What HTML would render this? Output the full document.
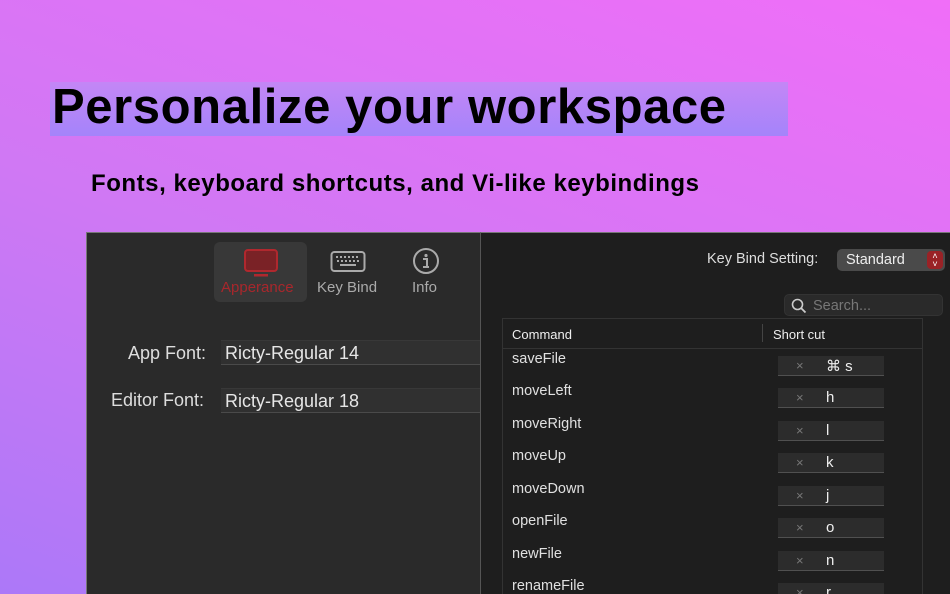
<!DOCTYPE html>
<html><head><meta charset="utf-8"><style>
*{margin:0;padding:0;box-sizing:border-box}
html,body{width:950px;height:594px;overflow:hidden}
body{position:relative;font-family:"Liberation Sans",Helvetica,Arial,sans-serif;background:linear-gradient(20deg,#ac78f8 0%,#cf78f4 45%,#f06ef8 100%)}
.band{position:absolute;left:50px;top:82px;width:738px;height:54px;background:linear-gradient(180deg,#c486f6,#a484fa)}
h1{position:absolute;left:52px;top:79px;font-size:49px;font-weight:bold;color:#000;letter-spacing:0.6px;white-space:nowrap}
h2{position:absolute;left:91px;top:170px;font-size:24px;font-weight:bold;color:#000;letter-spacing:0.55px;white-space:nowrap}
.lp{position:absolute;left:86px;top:232px;width:394px;height:362px;background:#2a2a2a;border-left:1px solid #777;border-top:1px solid #777;overflow:hidden}
.rp{position:absolute;left:480px;top:232px;width:470px;height:362px;background:#1e1e1e;border-top:1px solid #777;border-left:1px solid #555;overflow:hidden}
.t{position:absolute;color:#ddd;white-space:nowrap}
.sel{position:absolute;left:127px;top:9px;width:93px;height:60px;background:#383838;border-radius:6px}
.inp{position:absolute;left:134px;width:260px;height:25px;background:#303030;border-bottom:1px solid #4a4a4a;border-top:1px solid #383838;color:#e6e6e6;font-size:18px;padding:2px 4px}
.tbl{position:absolute;left:21px;top:85px;width:421px;height:290px;border:1px solid #333;background:#1e1e1e}
.sc{position:absolute;left:275px;width:106px;height:20px;background:#2c2c2c;border-bottom:1px solid #505050}
.sc .x{position:absolute;left:18px;top:2px;color:#777;font-size:13px}
.sc .k{position:absolute;left:48px;top:1px;color:#eee;font-size:15px}
.cmd{position:absolute;left:9px;color:#e0e0e0;font-size:14.5px}
</style></head><body>
<div class="band"></div>
<h1>Personalize your workspace</h1>
<h2>Fonts, keyboard shortcuts, and Vi-like keybindings</h2>
<div class="lp">
 <div class="sel"></div>
 <svg style="position:absolute;left:156px;top:15px" width="36" height="30" viewBox="0 0 36 30"><rect x="2" y="2" width="32" height="21" rx="3" fill="#7a2226" stroke="#b0282e" stroke-width="2"/><rect x="11" y="26" width="14" height="2.5" fill="#b0282e"/></svg>
 <svg style="position:absolute;left:243px;top:17px" width="36" height="24" viewBox="0 0 36 24"><rect x="1.5" y="2" width="33" height="19" rx="3" fill="none" stroke="#aaa" stroke-width="2"/><g fill="#aaa"><path d="M6 6h2v2H6zM10 6h2v2h-2zM14 6h2v2h-2zM18 6h2v2h-2zM22 6h2v2h-2zM26 6h2v2h-2zM7 10h2v2H7zM11 10h2v2h-2zM15 10h2v2h-2zM19 10h2v2h-2zM23 10h2v2h-2zM27 10h2v2h-2z"/><rect x="10" y="14" width="16" height="2"/></g></svg>
 <svg style="position:absolute;left:325px;top:14px" width="28" height="28" viewBox="0 0 28 28"><circle cx="14" cy="14" r="12" fill="none" stroke="#aaa" stroke-width="2"/><circle cx="14" cy="8.5" r="1.6" fill="#aaa"/><path d="M11 12h4v8M11 20h6" stroke="#aaa" stroke-width="2" fill="none"/></svg>
 <div class="t" style="left:134px;top:46px;font-size:15px;color:#a8272c">Apperance</div>
 <div class="t" style="left:230px;top:46px;font-size:15px;color:#aaa">Key Bind</div>
 <div class="t" style="left:325px;top:46px;font-size:15px;color:#aaa">Info</div>
 <div class="t" style="left:41px;top:110px;font-size:18px">App Font:</div>
 <div class="inp" style="top:107px">Ricty-Regular 14</div>
 <div class="t" style="left:24px;top:157px;font-size:18px">Editor Font:</div>
 <div class="inp" style="top:155px">Ricty-Regular 18</div>
</div>
<div class="rp">
 <div class="t" style="left:226px;top:18px;font-size:14.5px">Key Bind Setting:</div>
 <div style="position:absolute;left:356px;top:16px;width:108px;height:22px;background:#4a4a4a;border-radius:5px"><span class="t" style="left:9px;top:3px;font-size:14.5px;color:#eee">Standard</span><div style="position:absolute;right:2px;top:2px;width:16px;height:18px;background:#9a2226;border-radius:4px;color:#fff;font-size:9px;text-align:center;line-height:8px;padding-top:1px">˄<br>˅</div></div>
 <div style="position:absolute;left:303px;top:61px;width:159px;height:22px;background:#2a2a2a;border-radius:5px;border:1px solid #333"><svg style="position:absolute;left:6px;top:3px" width="16" height="16" viewBox="0 0 16 16"><circle cx="6.5" cy="6.5" r="5" fill="none" stroke="#ccc" stroke-width="1.6"/><path d="M10 10l4.5 4.5" stroke="#ccc" stroke-width="1.8"/></svg><span class="t" style="left:28px;top:3px;font-size:14.5px;color:#777">Search...</span></div>
 <div class="tbl">
  <div class="t" style="left:9px;top:8px;font-size:13px;color:#eee">Command</div>
  <div style="position:absolute;left:259px;top:5px;width:1px;height:18px;background:#444"></div>
  <div class="t" style="left:270px;top:8px;font-size:13px;color:#eee">Short cut</div>
  <div style="position:absolute;left:0;top:29px;width:419px;height:1px;background:#333"></div>
  <div class="cmd" style="top:32px">saveFile</div><div class="sc" style="top:37px"><span class="x">×</span><span class="k">⌘ s</span></div>
  <div class="cmd" style="top:64px">moveLeft</div><div class="sc" style="top:69px"><span class="x">×</span><span class="k">h</span></div>
  <div class="cmd" style="top:97px">moveRight</div><div class="sc" style="top:102px"><span class="x">×</span><span class="k">l</span></div>
  <div class="cmd" style="top:129px">moveUp</div><div class="sc" style="top:134px"><span class="x">×</span><span class="k">k</span></div>
  <div class="cmd" style="top:162px">moveDown</div><div class="sc" style="top:167px"><span class="x">×</span><span class="k">j</span></div>
  <div class="cmd" style="top:194px">openFile</div><div class="sc" style="top:199px"><span class="x">×</span><span class="k">o</span></div>
  <div class="cmd" style="top:227px">newFile</div><div class="sc" style="top:232px"><span class="x">×</span><span class="k">n</span></div>
  <div class="cmd" style="top:259px">renameFile</div><div class="sc" style="top:264px"><span class="x">×</span><span class="k">r</span></div>
 </div>
</div>
</body></html>
